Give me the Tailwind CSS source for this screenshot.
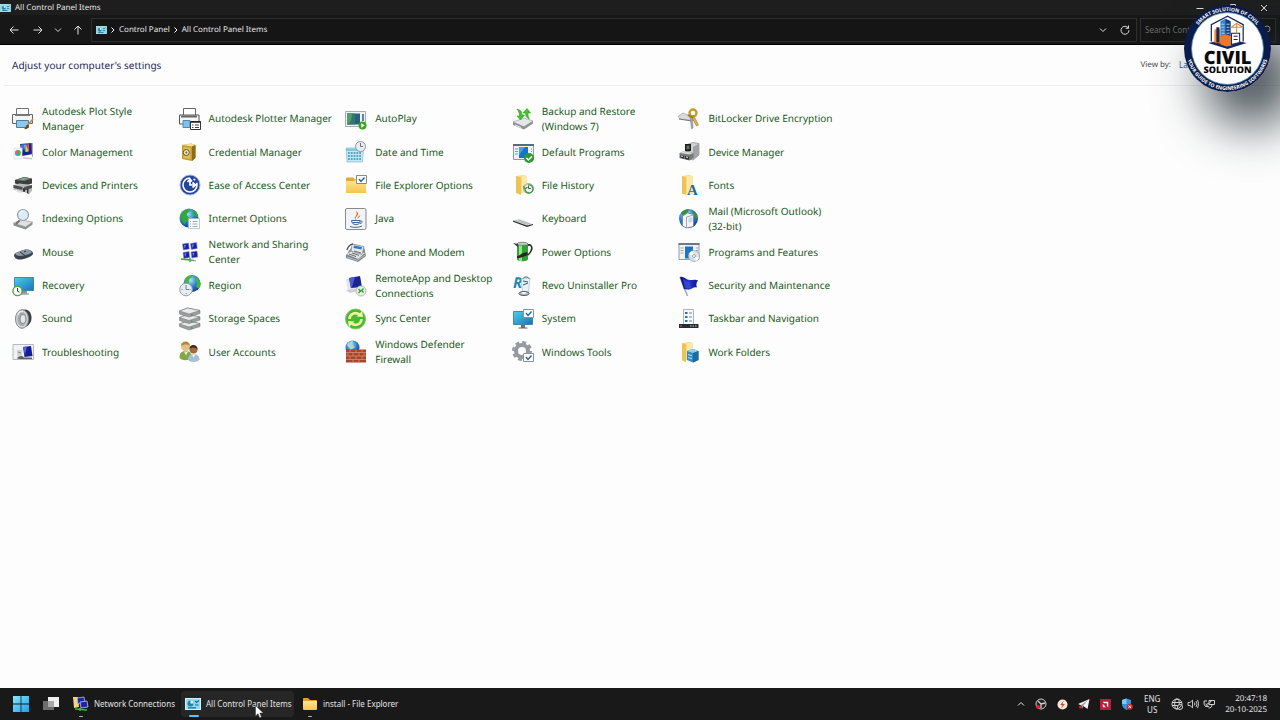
<!DOCTYPE html>
<html lang="en">
<head>
<meta charset="utf-8">
<meta name="viewport" content="width=device-width, initial-scale=1">
<title>All Control Panel Items</title>
<script src="https://cdn.jsdelivr.net/npm/@tailwindcss/browser@4"></script>
</head>
<body class="relative flex min-h-screen flex-col overflow-x-hidden bg-[#fdfdfd] font-['Noto_Sans','Open_Sans',sans-serif] text-[10px] [text-rendering:geometricPrecision]">

<svg class="absolute size-0" aria-hidden="true">
  <defs>
    <linearGradient id="screen" x1="0" y1="0" x2="1" y2="1"><stop offset="0" stop-color="#4fd0e6"/><stop offset="1" stop-color="#1474b8"/></linearGradient>
    <linearGradient id="folder" x1="0" y1="0" x2="0" y2="1"><stop offset="0" stop-color="#ffe594"/><stop offset="1" stop-color="#f3c64c"/></linearGradient>
    <linearGradient id="navy" x1="0" y1="0" x2="1" y2="0"><stop offset="0" stop-color="#0b1170"/><stop offset=".5" stop-color="#2a36c8"/><stop offset="1" stop-color="#0d1488"/></linearGradient>
    <linearGradient id="win" gradientUnits="userSpaceOnUse" x1="0" y1="0" x2="16" y2="16"><stop offset="0" stop-color="#8be6ff"/><stop offset="1" stop-color="#1aa0e8"/></linearGradient>
    <radialGradient id="globe" cx=".4" cy=".3" r=".8"><stop offset="0" stop-color="#a8e4ff"/><stop offset=".5" stop-color="#2c80d0"/><stop offset="1" stop-color="#0b2f7c"/></radialGradient>
    <symbol id="cpl" viewBox="0 0 16 12">
      <rect x=".5" y=".5" width="15" height="11" fill="#8adcf2" stroke="#d6f3fb"/>
      <circle cx="5.5" cy="5.5" r="3" fill="#2a7fa8"/><path d="M5.500 5.500V2.500A3 3 0 0 1 8.500 5.500z" fill="#e8f6e0"/>
      <path d="M10 3l1.500 1.500L14 2.500M10 7h3.500M3 9.800h8" stroke="#1b6f96" stroke-width="1.200" fill="none"/>
    </symbol>
  </defs>
</svg>

<header class="bg-[#181818] text-[#e6e6e6]">
  <div class="flex h-[15px] items-center gap-1 bg-[#1e1e1e] pr-3 text-[8px]">
    <svg class="h-2 w-[11px]"><use href="#cpl"/></svg>
    <h1 class="flex-1 leading-[15px]">All Control Panel Items</h1>
    <div class="flex items-center gap-6">
      <button aria-label="Minimize"><svg class="size-2" viewBox="0 0 8 8"><path d="M.5 4.500h7" stroke="#ddd"/></svg></button>
      <button aria-label="Restore"><svg class="size-2" viewBox="0 0 8 8" fill="none" stroke="#ddd"><path d="M.5 2.500h5v5h-5zM2.500 2.500v-2h5v5h-2"/></svg></button>
      <button aria-label="Close"><svg class="size-2" viewBox="0 0 8 8"><path d="M1 1l6 6M7 1L1 7" stroke="#eee"/></svg></button>
    </div>
  </div>
  <div class="flex h-[30px] items-center border-b border-black bg-[#171717] pr-1 text-[8px]">
    <nav class="flex w-[91px] items-center gap-[11px] pl-[9px]" aria-label="History">
      <button aria-label="Back"><svg class="size-[10px]" viewBox="0 0 10 10" fill="none" stroke="#e4e4e4"><path d="M9.500 5H1M4.500 1.500L1 5l3.500 3.500"/></svg></button>
      <button class="ml-[3px]" aria-label="Forward"><svg class="size-[10px]" viewBox="0 0 10 10" fill="none" stroke="#e4e4e4"><path d="M.5 5H9M5.500 1.500L9 5 5.500 8.500"/></svg></button>
      <button aria-label="Recent locations"><svg class="h-[10px] w-2" viewBox="0 0 8 10" fill="none" stroke="#cfcfcf"><path d="M1 3.500l3 3 3-3"/></svg></button>
      <button aria-label="Up"><svg class="size-[10px]" viewBox="0 0 10 10" fill="none" stroke="#e4e4e4"><path d="M5 9.500V1M1.500 4.500L5 1l3.500 3.500"/></svg></button>
    </nav>
    <div class="flex h-[24px] flex-1 items-center border border-[#2e2e2e] bg-[#151515] pl-1">
      <svg class="h-2 w-[11px]"><use href="#cpl"/></svg>
      <svg class="mx-1 h-2 w-1" viewBox="0 0 4 8" fill="none" stroke="#fff"><path d="M.5 1.500L3 4 .5 6.500"/></svg>
      <a href="#">Control Panel</a>
      <svg class="mx-1 h-2 w-1" viewBox="0 0 4 8" fill="none" stroke="#fff"><path d="M.5 1.500L3 4 .5 6.500"/></svg>
      <a href="#" class="flex-1">All Control Panel Items</a>
      <button class="mr-[13px]" aria-label="Previous locations"><svg class="size-2" viewBox="0 0 8 8" fill="none" stroke="#dcdcdc"><path d="M1 2.500l3 3 3-3"/></svg></button>
      <button class="mr-[6px]" aria-label="Refresh"><svg class="size-[10px]" viewBox="0 0 10 10" fill="none" stroke="#dcdcdc"><path d="M8.300 3A4 4 0 1 0 9 5.300M8.500.5v2.800H5.700"/></svg></button>
    </div>
    <label class="ml-[3px] flex h-[24px] w-[136px] items-center border border-[#2e2e2e] bg-[#151515] px-1">
      <input type="search" aria-label="Search Control Panel" placeholder="Search Control Panel" class="w-full bg-transparent outline-none placeholder:text-[#6c6c6c]">
      <svg class="size-[10px] shrink-0" viewBox="0 0 10 10" fill="none" stroke="#aaa"><circle cx="6" cy="4" r="3"/><path d="M4 6L1 9"/></svg>
    </label>
  </div>
</header>

<main class="flex-1">
  <div class="ml-1 flex h-[41px] items-center justify-between border-b border-[#ececec] pl-2">
    <h2 class="text-[10px] text-[#1c2755]">Adjust your computer's settings</h2>
    <div class="flex items-center gap-2 pr-[29px] text-[8px] text-[#4a4a4a]">
      <label for="view">View by:</label>
      <select id="view" class="w-[72px] appearance-none bg-transparent text-[#20608c]"><option>Large icons</option><option>Small icons</option></select>
    </div>
  </div>

  <nav aria-label="Control Panel items" class="mt-4 ml-[11px] grid min-h-[267px] max-w-[833px] grid-cols-5 grid-rows-8 leading-[15px] text-[#1a5a22] [&_a]:flex [&_a]:items-center [&_a]:gap-[7px] [&_a]:pr-1 [&_svg]:size-6 [&_svg]:shrink-0">
    <a href="#"><svg viewBox="0 0 24 24"><path d="M5.500 8V1.500h12V8" fill="#fff" stroke="#777"/><path d="M1.500 7.500h20v9h-20z" fill="#f4f4f4" stroke="#666"/><path d="M4 8h15" stroke="#777" stroke-width="2"/><path d="M5.500 13.500h12v7h-12z" fill="#8ec8ef" stroke="#4d7ea0"/><path d="M22 12l-7 8" stroke="#c98a3a" stroke-width="1.600"/><path d="M16.500 17.500l1.500 1.500c-1 3-3 3.500-5 3 2-1 1.500-3.500 3.500-4.500z" fill="#7a4a1c"/></svg><span>Autodesk Plot Style<br>Manager</span></a>
    <a href="#"><svg viewBox="0 0 24 24"><path d="M5.500 8V1.500h12V8" fill="#fff" stroke="#666"/><path d="M1.500 8h19.500v9h-19.500z" fill="#f6f6f6" stroke="#555"/><path d="M3 9.500h16" stroke="#666" stroke-width="2"/><path d="M5 13.500h7v7H5z" fill="#7cc3ee" stroke="#5a88a4"/><path d="M12.500 14.500h10v8h-10z" fill="#fff" stroke="#333"/><path d="M12.500 15h10" stroke="#222" stroke-width="1.500"/><path d="M14 18h1.500M17 18h4M14 20.500h1.500M17 20.500h4" stroke="#444"/></svg><span>Autodesk Plotter Manager</span></a>
    <a href="#"><svg viewBox="0 0 24 24"><path d="M1.500 4.500h20v15h-20z" fill="#f2f4f4" stroke="#a9adb0"/><path d="M3 6.500h13v11H3z" fill="#285f82"/><path d="M3 6.500h8v11H3z" fill="#2e7a70"/><path d="M3 17.500c3-1 5-5 5-11H3z" fill="#4fa06a"/><path d="M19 7v7" stroke="#2c5a86" stroke-width="1.500"/><circle cx="18.500" cy="18.500" r="4" fill="#3fa51c"/><path d="M17.300 16.300v4.400l3.500-2.200z" fill="#fff"/></svg><span>AutoPlay</span></a>
    <a href="#"><svg viewBox="0 0 24 24"><path d="M2 15l11-4 9 3-9 6z" fill="#e5e6e7" stroke="#999" stroke-width=".6"/><path d="M2 15v3l11 4.500v-3zM13 19.500v3l9-6V14z" fill="#8f9295"/><path d="M4 18l6 2.500" stroke="#eee"/><path d="M6 2c4 1 5 3 5 6h2.500L9.500 13 6 9h2.500C8.500 6 7.500 4 6 2zM18.500 12c-3-1-4-3-4-6H12l4-4.500L19.500 6H17c0 2 0 4 1.500 6z" fill="#43c52a" stroke="#208c14" stroke-width=".5"/></svg><span>Backup and Restore<br>(Windows 7)</span></a>
    <a href="#"><svg viewBox="0 0 24 24"><path d="M1 9.500L6 6l11 4.500-1 3L3 12z" fill="#d9dadb" stroke="#999" stroke-width=".6"/><path d="M2 12l13 2" stroke="#777"/><circle cx="16" cy="6" r="3.500" fill="none" stroke="#c89a34" stroke-width="2.400"/><path d="M17 9l4.500 9-2 1-5-9z" fill="#ddb24c" stroke="#936a18" stroke-width=".5"/><path d="M13 9.500L14.500 22l1.500-1-.5-11z" fill="#a9a9a9" stroke="#666" stroke-width=".4"/><path d="M11 8l5 3" stroke="#a87918" stroke-width="2"/></svg><span>BitLocker Drive Encryption</span></a>

    <a href="#"><svg viewBox="0 0 24 24"><path d="M9 4l12-1 1 11-11 2z" fill="#1c2290"/><path d="M9.500 4.500L15 4l-4 9z" fill="#5a66d4"/><path d="M13 5l5-.5-.5 7-3 .5z" fill="#f0d820"/><path d="M15 5l3-.5-.5 7z" fill="#e23a6a"/><path d="M13 5h2v6l-1 1z" fill="#28c6b8"/><path d="M20.500 3l1.500 0 0 14-1 0z" fill="#aaa"/><path d="M3 8h8v11H3z" fill="#f6f6f6" stroke="#ddd" stroke-width=".6"/><circle cx="6.800" cy="13" r="3" fill="#e8d838"/><path d="M6.800 10a3 3 0 0 1 0 6z" fill="#3dbb4a"/><path d="M4 13a3 3 0 0 1 3-3v3z" fill="#d8589a"/><path d="M4 13a3 3 0 0 0 3 3v-3z" fill="#4a9be0"/><path d="M12 17l9 1v1.500l-9-1z" fill="#c9c9c9"/></svg><span>Color Management</span></a>
    <a href="#"><svg viewBox="0 0 24 24"><path d="M4 5l9-1.500 4.500 1.500v13L14 21 4 19z" fill="#c49c30"/><path d="M4 5l9-1.500L17.500 5 14 6.500z" fill="#f3e19a"/><path d="M14 6.500L17.500 5v13L14 21z" fill="#8e6d16"/><path d="M5.500 7l7 .8V19l-7-1.200z" fill="#dcc060"/><circle cx="8.300" cy="12.500" r="3" fill="#efe6c8" stroke="#695114"/><circle cx="8.300" cy="12.500" r="1" fill="#6a6048"/></svg><span>Credential Manager</span></a>
    <a href="#"><svg viewBox="0 0 24 24"><path d="M2 8l15 0 2.500 1L18.500 22H3z" fill="#c2e8f4" stroke="#78b4c8" stroke-width=".6"/><path d="M2 8.500h16v2.500H2z" fill="#80cade"/><path d="M4 13h13M4 16h13M4 19h13" stroke="#5aa6c0" stroke-width="1.800" stroke-dasharray="1.800 1"/><circle cx="16.500" cy="6.500" r="5" fill="#e9edef" stroke="#8e989c"/><path d="M16.500 3v3.500H19" fill="none" stroke="#68757c"/></svg><span>Date and Time</span></a>
    <a href="#"><svg viewBox="0 0 24 24"><path d="M2.500 4.500h20v15h-20z" fill="#eef2f5" stroke="#8e9aa4"/><path d="M2 4h21v2H2z" fill="#566a7c"/><path d="M4 9h3M4 11.500h3M4 14h3M20 9h1M20 11.500h1" stroke="#7a99b8"/><path d="M8 7h9v11H8z" fill="#1872c8"/><path d="M8 7h6l-6 8z" fill="#4c9ce4"/><circle cx="18" cy="18" r="5" fill="#2d9a34"/><path d="M15.500 18l2 2 3.500-3.800" fill="none" stroke="#fff" stroke-width="1.500"/></svg><span>Default Programs</span></a>
    <a href="#"><svg viewBox="0 0 24 24"><path d="M9 5l7-2.500 6 1V15l-6 5-7-3z" fill="#d2d3d4" stroke="#777" stroke-width=".6"/><path d="M16 7l6-3.500V15l-6 5z" fill="#a1a3a5"/><path d="M8 4l6 0v7l-6 1z" fill="#1c1c1e"/><path d="M9.500 5.500l3 0v3.500l-3 .5z" fill="#567a50"/><path d="M2.500 13l5-2 9 2v5l-4 2.500L2.500 18z" fill="#77797c"/><path d="M2.500 13l5-2 9 2-4 1.500z" fill="#d6d7d8"/><path d="M3.500 15l3.500.7v3l-3.500-1zM8 16l4 .8v3L8 19z" fill="#333"/><path d="M4 16l2 .4M9 17l2 .4" stroke="#eee"/></svg><span>Device Manager</span></a>

    <a href="#"><svg viewBox="0 0 24 24"><path d="M4 7l9-3 8 1.500v5L13 13 4 10.500z" fill="#3b3d3f"/><path d="M4 7l9-3 8 1.500L13 8z" fill="#75787b"/><path d="M8 6.500l5-1.500 4 .8L12.500 7z" fill="#82b48c"/><path d="M2.500 12l6-1.500L21 12v6l-3 3-5-2-5 .5-5.500-3z" fill="#b9bbbd"/><path d="M2.500 12l9 2v3l-9-2zM13 14l8-2v3l-7 2.500z" fill="#4c4e50"/><path d="M12 15l2 .5V19l-2-.5zM16 16l1.500 0V21l-1.500-1z" fill="#333"/><path d="M4 17l6 2" stroke="#efefef"/></svg><span>Devices and Printers</span></a>
    <a href="#"><svg viewBox="0 0 24 24"><circle cx="12" cy="12" r="10" fill="#23459c" stroke="#a5b4d8"/><circle cx="12" cy="12" r="7" fill="none" stroke="#fff" stroke-width="1.600" stroke-dasharray="33 3.500 2 3"/><path d="M12 6v6h5.500M14.500 9.500L17.500 12l-3 2.500M9.500 9L12 6l2 2.500" fill="none" stroke="#fff" stroke-width="1.700"/></svg><span>Ease of Access Center</span></a>
    <a href="#"><svg viewBox="0 0 24 24"><path d="M2 5.500q0-1 1-1h6l2 2h10q1 0 1 1V19q0 1-1 1H3q-1 0-1-1z" fill="#e2aa30"/><path d="M2 9q0-1 1-1h7l2-1h9q1 0 1 1v11q0 1-1 1H3q-1 0-1-1z" fill="url(#folder)"/><path d="M12.500 2.500h10v8h-10z" fill="#fff" stroke="#8b8b8b"/><path d="M15 6l2 2.500 3.500-4" fill="none" stroke="#1f62a8" stroke-width="1.400"/></svg><span>File Explorer Options</span></a>
    <a href="#"><svg viewBox="0 0 24 24"><path d="M5 3l7-1 4 1v17H5z" fill="#f7dc84"/><path d="M5 3l5 1.500V22L5 20z" fill="#ecc456"/><path d="M11 3h5v17h-5z" fill="#fae8a8"/><circle cx="17.500" cy="15.500" r="4.800" fill="#f0f2f0" stroke="#8b9490"/><path d="M14 16a4 4 0 1 0 3-4M12.500 13l1.500 3 2.500-2" fill="none" stroke="#3c9a44" stroke-width="1.300"/><path d="M17.500 13v2.500h2.500" fill="none" stroke="#555"/></svg><span>File History</span></a>
    <a href="#"><svg viewBox="0 0 24 24"><path d="M5 3l7-1 4 1v18H5z" fill="#f7dc84"/><path d="M5 3l4 1.500V22l-4-1.500z" fill="#ecc456"/><path d="M10 3h6v17h-6z" fill="#fae8a8"/><text x="10" y="21.500" font-family="Liberation Serif, serif" font-size="15" font-weight="bold" fill="#276a92">A</text></svg><span>Fonts</span></a>

    <a href="#"><svg viewBox="0 0 24 24"><path d="M2.500 16l8-3 11 2-7 5z" fill="#dedfe0" stroke="#999" stroke-width=".6"/><path d="M2.500 16v2.500l12 4V20zM14.500 20v2.500l7-5V15z" fill="#8d8f91"/><path d="M8.500 13.500L5 17" stroke="#7c6f60" stroke-width="2"/><circle cx="12" cy="8" r="5.500" fill="#dcecf7" stroke="#8fa2b0" stroke-width="1.200"/><path d="M8.500 7a4 4 0 0 1 4-3" stroke="#fff" fill="none"/></svg><span>Indexing Options</span></a>
    <a href="#"><svg viewBox="0 0 24 24"><circle cx="11" cy="11" r="9.500" fill="url(#globe)"/><path d="M3 7c2-4 6-5.500 9-5 1 2-2 3-3 5s3 2 2 5-4 2-4 5c-3-2-5-6-4-10zM15 3c3 1 5 4 5 7-2 0-4-1-5-3z" fill="#35a83a"/><path d="M10.500 11.500h11v10h-11z" fill="#fafcfd" stroke="#a7b4ba" stroke-width=".7"/><path d="M12 14.500h1M14.500 14.500h5M12 17h1M14.500 17h5M12 19.500h1M14.500 19.500h5" stroke="#7c99a8" stroke-width=".8"/></svg><span>Internet Options</span></a>
    <a href="#"><svg viewBox="0 0 24 24"><rect x="1.500" y="1.500" width="20.500" height="21" rx="1.500" fill="#f2f3f4" stroke="#878b8f"/><path d="M12 13c-4-3 3-4 0-9 3 2 2.500 3.500 1 5s-2 2-1 4zM14 12c-1-2 1-3 2.500-4-.5 2-2.500 2-2.500 4z" fill="#e0641c"/><path d="M7.500 13.500h8.500c0 3-1 4-4 4s-4-1-4.500-4z" fill="none" stroke="#46698c"/><path d="M16 14c3-.5 3 2 0 2.500M6 19.500c3 1.200 9 1.200 12-.5M8.500 15.500h7" fill="none" stroke="#46698c"/></svg><span>Java</span></a>
    <a href="#"><svg viewBox="0 0 24 24"><path d="M2 13.500l6-1.500 14 5-6 1.500z" fill="#d9dbdd"/><path d="M2 13.500l14 5 6-1.500v1L16 20 2 14.800z" fill="#2f3133"/><path d="M5 13.500l12 4M8 13l11 4" stroke="#a1a4a7" stroke-width=".7"/></svg><span>Keyboard</span></a>
    <a href="#"><svg viewBox="0 0 24 24"><circle cx="11.500" cy="11.500" r="9.500" fill="url(#globe)"/><path d="M4 6c2-3 6-4 8-4l-2 5-4 2zM15 3c4 2 6 6 5.500 10L17 10zM3 14l4 6-3-2z" fill="#3a8f3d"/><path d="M5.500 9l5-3 6 1.500v12L9.500 21l-4-2z" fill="#f4f6f8" stroke="#66798c" stroke-width=".7"/><path d="M9.500 10v11M9.500 10l7-2" stroke="#9aa8b4" fill="none"/><path d="M11.500 11l4-1v5l-4 1z" fill="#c9d8e4"/></svg><span>Mail (Microsoft Outlook)<br>(32-bit)</span></a>

    <a href="#"><svg viewBox="0 0 24 24"><path d="M3 15c0-2 8-5 12-5.500 4 0 7 2 7 4 0 3-9 6-13 6s-6-2-6-4.500z" fill="#39424d"/><path d="M4 14c2-2 8-4.500 11-4.300 3 .1 5.500 1.300 6 2.800-3 2-9 3.500-12 3.500-2 0-4-1-5-2z" fill="#8d99a6"/><path d="M9 12l5 3.500M13 12l2-1" stroke="#2c343d" stroke-width="1"/></svg><span>Mouse</span></a>
    <a href="#"><svg viewBox="0 0 24 24"><g fill="#1a20a4" stroke="#8b90c8" stroke-width=".6"><path d="M4.500 4l6-1 .8 6-6 1zM12.500 3.500l6-1 .8 6-6 1zM5 12.500l6-1 .8 6-6 1zM13 12l6-1 .8 6-6 1z"/></g><path d="M6 5l2-.3-1.500 4zM14 4.500l2-.3-1.500 4zM6.500 13.500l2-.3-1.500 4zM14.500 13l2-.3-1.500 4z" fill="#7884ec"/><path d="M3 19l13 1.500M12 18v4" stroke="#3aa63c" stroke-width="1.600"/><path d="M12 19.500l6 1.500" stroke="#999"/></svg><span>Network and Sharing<br>Center</span></a>
    <a href="#"><svg viewBox="0 0 24 24"><path d="M2 15l8-11 10 3 2 9-8 6-12-4z" fill="#7d8288"/><path d="M2 14l8-4 11 3-7 6z" fill="#dfe2e4"/><path d="M8 4l12 2.500-2 8L7 11z" fill="#e6e8ea" stroke="#84898e" stroke-width=".7"/><path d="M10 5.500l8 1.500-.6 2.500-8-1.600z" fill="#2c7cc8"/><path d="M10 11l7 2M5 14l7 2.500M8 13l7 2.300" stroke="#636870"/><path d="M3 10c1-4 4-6 6-6" fill="none" stroke="#555" stroke-width="1.500"/><path d="M3 17l10 3.500 8-5.500" fill="none" stroke="#bcc0c4"/></svg><span>Phone and Modem</span></a>
    <a href="#"><svg viewBox="0 0 24 24"><path d="M15 6c5-3 7 1 5 5-1 2-2 3-3 4" fill="none" stroke="#2a2a2a" stroke-width="1.600"/><path d="M6 4c0-2 11-2 11 0v15c0 3-11 3-11 0z" fill="#2fa336"/><path d="M8 4.500v16c1 .5 2 .5 3 .5V5z" fill="#8ee887"/><ellipse cx="11.500" cy="3.800" rx="5.500" ry="1.600" fill="#c4cdc2" stroke="#55604f" stroke-width=".6"/><path d="M2 3l5 1v3z" fill="#333"/><path d="M6 16c3 0 3-2 6-3l4-1 1 3-5 2c-3 1-4 1-6 1z" fill="#26282a"/></svg><span>Power Options</span></a>
    <a href="#"><svg viewBox="0 0 24 24"><path d="M2 3.500h20v16H2z" fill="#f1f4f6" stroke="#949da5"/><path d="M1.500 3h21v2h-21z" fill="#6d7a86"/><path d="M3.500 8h3M3.500 10.500h3M3.500 13h3M19 8h2M19 10.500h2" stroke="#8aa4bc"/><path d="M8 6.500h8v12H8z" fill="#1b74c6"/><circle cx="17" cy="16" r="5.500" fill="#dce2e6" stroke="#97a0a8" stroke-width=".7"/><path d="M17 16l-5-2a5.500 5.500 0 0 1 3-3zM17 16l5 2a5.500 5.500 0 0 1-3 3z" fill="#fff"/><circle cx="17" cy="16" r="1.500" fill="#fff" stroke="#9aa"/></svg><span>Programs and Features</span></a>

    <a href="#"><svg viewBox="0 0 24 24"><path d="M3.500 3.500h19v13h-19z" fill="url(#screen)" stroke="#27789e" stroke-width=".8"/><path d="M11 17h5v2.500h-5z" fill="#8b9298"/><path d="M9 20h9" stroke="#737a80"/><circle cx="6.500" cy="17" r="4.600" fill="#fbfdfa" stroke="#58a33c" stroke-width="1.400"/><path d="M6.500 14v3.200l2 1" fill="none" stroke="#333"/></svg><span>Recovery</span></a>
    <a href="#"><svg viewBox="0 0 24 24"><circle cx="14" cy="9.500" r="8.500" fill="url(#globe)"/><path d="M7 5c2-3 5-4 8-4-1 3-3 3-4 5s1 3 0 5-3 0-4 0zM18 3c3 2 5 5 4.500 9-1 2-3 3-4 1s2-3 0-5-2-3-.5-5z" fill="#4bb33c"/><circle cx="8" cy="15.500" r="6.300" fill="#e7edf1" stroke="#97a2aa"/><path d="M8 11v4.500h3M8 20v-1M3.500 15.500h1M12.500 15.500h-1" fill="none" stroke="#66737c" stroke-width=".9"/></svg><span>Region</span></a>
    <a href="#"><svg viewBox="0 0 24 24"><path d="M2 5l12-2v12L4 18z" fill="#e3e4ea"/><path d="M5 4l11-2 2 11-11 1z" fill="#1c2492"/><path d="M5 4l6-1-3 10-1 1z" fill="#4e5ccc"/><path d="M2 16l10-1 3 2-9 2z" fill="#cdd0d4"/><circle cx="17" cy="17" r="5" fill="#e6efe4" stroke="#b4bdb2"/><path d="M14.500 15l2 2-2 2M19.500 14.500l-2 2 2 2" fill="none" stroke="#389c34" stroke-width="1.400"/></svg><span>RemoteApp and Desktop<br>Connections</span></a>
    <a href="#"><svg viewBox="0 0 24 24"><text x="2" y="14" font-family="Open Sans, sans-serif" font-size="15" font-style="italic" font-weight="bold" fill="#2487b4">R</text><path d="M10 5l9-1-1.500 14h-6z" fill="#d6ebf2" fill-opacity=".6" stroke="#9cb6c0" stroke-width=".6"/><path d="M12 4.500c1-2 5-2 6 0M12 7l5 1M12 11l5-2" fill="none" stroke="#3e5866"/><ellipse cx="13" cy="19.500" rx="5" ry="2" fill="#bcc2c6" stroke="#555"/><ellipse cx="13" cy="18.800" rx="2.500" ry=".9" fill="#fff"/></svg><span>Revo Uninstaller Pro</span></a>
    <a href="#"><svg viewBox="0 0 24 24"><path d="M3 3l7.500 19" stroke="#a9adb2" stroke-width="1.600"/><path d="M3 3c4-1 6 3 10 3s5-1 8 .5c-2 2-2 5-1 7-4-1-6 3-10 2-2-.4-3 0-3 0z" fill="url(#navy)"/><path d="M6 5c3 1 4 3 7 3l1 6c-2 1-4 0-6 0z" fill="#3a50d8" fill-opacity=".7"/></svg><span>Security and Maintenance</span></a>

    <a href="#"><svg viewBox="0 0 24 24"><path d="M11 3c5-2 9 1 9.500 7S16 21 12 20z" fill="#3e4042"/><ellipse cx="11" cy="12" rx="6.500" ry="9.300" fill="#d1d3d5" stroke="#858789"/><ellipse cx="11" cy="12" rx="4.500" ry="7" fill="#a6a8aa"/><ellipse cx="12" cy="12" rx="2.800" ry="4.300" fill="#e6e7e8" stroke="#77797b" stroke-width=".7"/><path d="M7 8c1-3 3-4 5-3" fill="none" stroke="#fff"/></svg><span>Sound</span></a>
    <a href="#"><svg viewBox="0 0 24 24"><g stroke="#76797b" stroke-width=".6"><path d="M1.500 17l8-3 12.500 2.500v3L11 23 1.500 19.500z" fill="#9c9ea0"/><path d="M1.500 17l8-3 12.500 2.500-11 3.500z" fill="#e8e9ea"/><path d="M1.500 10.500l8-3L22 10v3l-11 3.500L1.500 13.500z" fill="#9c9ea0"/><path d="M1.500 10.500l8-3L22 10l-11 3.500z" fill="#e8e9ea"/><path d="M1.500 4l8-3L22 3.500v3L11 10 1.500 7z" fill="#9c9ea0"/><path d="M1.500 4l8-3L22 3.500 11 7z" fill="#e8e9ea"/></g><path d="M13 8h1.500M13 14.500h1.500M13 21h1.500" stroke="#3c9a34" stroke-width="1.500"/></svg><span>Storage Spaces</span></a>
    <a href="#"><svg viewBox="0 0 24 24"><circle cx="11.500" cy="12" r="10" fill="#48b830" stroke="#78cc60"/><path d="M5.500 12a6 6 0 0 1 10-4.300M17.500 12a6 6 0 0 1-10 4.300" fill="none" stroke="#f2f3a0" stroke-width="2.600"/><path d="M12.500 9.500l6.500.5-1-6zM10.500 14.500L4 14l1 6z" fill="#f2f3a0"/></svg><span>Sync Center</span></a>
    <a href="#"><svg viewBox="0 0 24 24"><path d="M2.500 4.500h19v13h-19z" fill="url(#screen)" stroke="#27789e" stroke-width=".8"/><path d="M10 18h4v3h-4z" fill="#69727a"/><path d="M7.500 21h9" stroke="#5d666e"/><path d="M12.500 2.500h10v8h-10z" fill="#fff" stroke="#8b9298"/><path d="M15 6l2 2.500 3.500-4" fill="none" stroke="#1f62a8" stroke-width="1.400"/></svg><span>System</span></a>
    <a href="#"><svg viewBox="0 0 24 24"><path d="M6.500 2.500h10v15h-10z" fill="#f7f8f9" stroke="#b1b5b9"/><path d="M8 5h2.500v2H8zM8 9h2.500v2H8zM8 13h2.500v2H8z" fill="#2870b0"/><path d="M12 6h3M12 10h3M12 14h3" stroke="#7a8288"/><path d="M2 17h19.500v4H2z" fill="#2a2b2d"/><path d="M13 19h1.500M15.500 19H17M18 19h1.500" stroke="#ccc"/><path d="M3 19h2" stroke="#888"/></svg><span>Taskbar and Navigation</span></a>

    <a href="#"><svg viewBox="0 0 24 24"><path d="M2 4.500h20.500v15H2z" fill="#f1f2f4" stroke="#b6b9bd"/><path d="M12 7l8-1 1.500 10-8 1z" fill="#141c96"/><path d="M12 7l4-.5L14 15z" fill="#5564d8"/><path d="M6 10h5v8H6z" fill="#d2d4d6"/><path d="M6 18.500c3-3 5-3 7-1h8v1.500H8z" fill="#5e6266"/><path d="M7 12l3 1" stroke="#888"/></svg><span>Troubleshooting</span></a>
    <a href="#"><svg viewBox="0 0 24 24"><circle cx="7.500" cy="6.500" r="4.500" fill="#e3c088"/><path d="M3 6c0-6 9-6 9 0-2-2-6-2-9 0z" fill="#b08a30"/><path d="M1.500 18c0-5 2-7 6-7s6 2 6 6l-4 3c-4 .5-7-.5-8-2z" fill="#84a646"/><path d="M6 11.500l2 4 2-4z" fill="#e9efe0"/><circle cx="15.500" cy="9.500" r="4" fill="#a26a40"/><path d="M11.500 9c0-6 8.500-5 8 1-1-2-4-4-8-1z" fill="#3a2a20"/><path d="M10 20c0-4 2-6 5.500-6s6 2 6 6c-3 2.500-9 2.500-11.500 0z" fill="#a4bfd8"/><path d="M14 14.500l1.500 3 2-3z" fill="#fff"/></svg><span>User Accounts</span></a>
    <a href="#"><svg viewBox="0 0 24 24"><circle cx="8.500" cy="7.500" r="7" fill="url(#globe)"/><path d="M3 5c2-3 4-4 6-4l-1 4 3 2-4 3z" fill="#a9dcc4"/><path d="M2 9.500h20v13H2z" fill="#a8432c"/><path d="M2 12.500h20M2 16h20M2 19.500h20M6 9.500v3M12 9.500v3M18 9.500v3M4 12.500V16M9 12.500V16M15 12.500V16M20 12.500V16M6 16v3.500M12 16v3.500M18 16v3.500M9 19.500v3M15 19.500v3" stroke="#d89a80" stroke-width=".7"/></svg><span>Windows Defender<br>Firewall</span></a>
    <a href="#"><svg viewBox="0 0 24 24"><circle cx="11" cy="11" r="6" fill="none" stroke="#959a9f" stroke-width="4"/><circle cx="11" cy="11" r="8.800" fill="none" stroke="#959a9f" stroke-width="2.400" stroke-dasharray="3.900 3"/><path d="M12.500 13.500h10v8h-10z" fill="#fff" stroke="#8b9298"/><path d="M15 17l2 2.500 3.500-4" fill="none" stroke="#1f62a8" stroke-width="1.400"/></svg><span>Windows Tools</span></a>
    <a href="#"><svg viewBox="0 0 24 24"><path d="M5 3l7-1 4 1v17H5z" fill="#f7dc84"/><path d="M5 3l4 1.500V22l-4-1.500z" fill="#ecc456"/><path d="M10 3h6v17h-6z" fill="#fae8a8"/><path d="M10 11l6-2 5.500 2v9L16 22.500 10 20z" fill="#2f8cc4"/><path d="M10 11l6-2 5.500 2L16 13z" fill="#8fd2f0"/><path d="M16 13l5.500-2v9L16 22.500z" fill="#1c6ca4"/><path d="M11 14.500l4 1.300M11 17.500l4 1.300" stroke="#bfe4f6"/></svg><span>Work Folders</span></a>
  </nav>
</main>

<footer class="flex h-8 items-center bg-[#191919] text-[8px] text-[#e4e4e4]">
  <button class="ml-[13px]" aria-label="Start"><svg class="size-4" viewBox="0 0 16 16" fill="url(#win)"><path d="M0 0h7.600v7.600H0zM8.400 0H16v7.600H8.400zM0 8.400h7.600V16H0zM8.400 8.400H16V16H8.400z"/></svg></button>
  <button class="ml-[14px]" aria-label="Task view"><svg class="size-4" viewBox="0 0 16 16"><path d="M0 5h11v9H0z" fill="#6e6e6e"/><path d="M5 1h11v10H5z" fill="#f0f0f0"/><path d="M5 5h6v6H5z" fill="#a9a9a9"/></svg></button>
  <button class="relative ml-2 flex h-[26px] w-[113px] items-center gap-[5px] pl-[6px] whitespace-nowrap">
    <svg class="size-4 shrink-0" viewBox="0 0 16 16"><path d="M0 1h5l1 10-5 1z" fill="#f0d878"/><path d="M4 2l7-1 1 6-7 1z" fill="#1a24b0" stroke="#c9cce8" stroke-width=".7"/><path d="M7 6l7-1 1 6-7 1z" fill="#1a24b0" stroke="#d9dcf0" stroke-width=".7"/><path d="M2 13l12 1M7 12v3" stroke="#3cb840" stroke-width="1.500"/></svg>
    <span>Network Connections</span>
    <span class="absolute bottom-0 left-[12px] h-px w-[4px] rounded-full bg-[#b5b5b5]"></span>
  </button>
  <button class="relative ml-px flex h-[26px] w-[113px] items-center gap-[5px] rounded-sm bg-[#262626] pl-1 whitespace-nowrap">
    <svg class="h-3 w-4 shrink-0"><use href="#cpl"/></svg>
    <span>All Control Panel Items</span>
    <span class="absolute bottom-0 left-[8px] h-[2px] w-[10px] rounded-full bg-[#5cc6ee]"></span>
    <svg class="absolute top-[14px] left-[74px] h-[14px] w-[9px]" viewBox="0 0 9 14"><path d="M.5.500v10.500l2.500-2.300 1.700 4 1.800-.8-1.700-3.800 3.500-.2z" fill="#fff" stroke="#333" stroke-width=".5"/></svg>
  </button>
  <button class="relative ml-1 flex h-[26px] items-center gap-[5px] pl-1 whitespace-nowrap">
    <svg class="h-4 w-4 shrink-0" viewBox="0 0 16 16"><path d="M1 3q0-1 1-1h4l2 2h6q1 0 1 1v8H1z" fill="#dba128"/><path d="M1 5h14v8q0 1-1 1H2q-1 0-1-1z" fill="url(#folder)"/></svg>
    <span>install - File Explorer</span>
    <span class="absolute bottom-0 left-[10px] h-px w-[4px] rounded-full bg-[#b5b5b5]"></span>
  </button>

  <div class="ml-auto flex items-center gap-[10px] pr-[13px]">
    <button aria-label="Show hidden icons"><svg class="size-2" viewBox="0 0 8 8" fill="none" stroke="#e4e4e4"><path d="M1 5.500l3-3 3 3"/></svg></button>
    <svg class="size-3" viewBox="0 0 12 12"><circle cx="6" cy="6" r="5" fill="#222" stroke="#cfcfcf"/><path d="M6 6L3 3M6 6l4-1M6 6v4" stroke="#cfcfcf" stroke-width="1.300"/><circle cx="3" cy="9" r="2" fill="#e0252c"/></svg>
    <svg class="size-[11px]" viewBox="0 0 12 12"><circle cx="6" cy="6" r="5.500" fill="#fbe6da"/><path d="M7.500 1.500L3.500 6.500H6L4.500 10.500 8.500 5.500H6z" fill="#c04a2c"/></svg>
    <svg class="size-3" viewBox="0 0 12 12"><path d="M0 6l11.500-5-2 10-3.500-2.500z" fill="#f4f4f4"/><path d="M3 7l7-5-5 6-.5 3z" fill="#9c9c9c"/><circle cx="2.500" cy="9" r="1.500" fill="#d8252c"/></svg>
    <svg class="size-[11px]" viewBox="0 0 12 12"><path d="M0 0h12v12H0z" fill="#c3173c"/><path d="M3 3h6v6L7.500 7.500v-3h-3zM3 5.500V9h3.500L5 7.500V7z" fill="#fff"/></svg>
    <svg class="size-3" viewBox="0 0 12 12"><path d="M1 2l4.500-1.500L10 2v4c0 3-2 5-4.500 6C3 11 1 9 1 6z" fill="#2f94dc"/><path d="M1 2l4.500-1.500V6H1z" fill="#7ccaf4"/><circle cx="8.700" cy="8.700" r="3" fill="#d22b38"/><path d="M7.500 7.500l2.400 2.400M9.900 7.500L7.500 9.900" stroke="#fff"/></svg>
    <button class="w-[18px] text-center leading-[11px]">ENG<br>US</button>
    <button class="flex items-center gap-1" aria-label="Network, volume and battery">
      <svg class="size-3" viewBox="0 0 12 12" fill="none" stroke="#d5d5d5"><circle cx="6" cy="6" r="5"/><ellipse cx="6" cy="6" rx="2.300" ry="5"/><path d="M1 4.500h10M1 7.500h6"/><circle cx="9" cy="9" r="2.500" fill="#191919"/><path d="M7.500 10.500l3-3"/></svg>
      <svg class="h-3 w-3" viewBox="0 0 12 12" fill="none" stroke="#d5d5d5"><path d="M1 4.500h2l2.500-2.300v7.600L3 7.500H1zM7.300 4.500q1 1.500 0 3M9 3q2 3 0 6M10.500 1.800q2.500 4 0 8.400" stroke-width=".9"/></svg>
      <svg class="h-3 w-3" viewBox="0 0 12 12" fill="none" stroke="#d5d5d5"><path d="M5 8.500H2.500q-2-2-1.500-5.500h3M6 2.500h5.500v4H6zM4 6c2 0 3-1 4-3M5.500 10c2 0 3.500-1 3.500-3.500M3 5.500q0 3 3 3"/></svg>
    </button>
    <time class="text-right leading-[11px]">20:47:18<br>20-10-2025</time>
  </div>
</footer>

<!-- Channel badge floating over the window corner -->
<div class="absolute top-[5px] right-[9px] size-[87px] rounded-full shadow-[24px_30px_50px_4px_rgba(28,40,48,0.8)]">
  <svg class="size-full" viewBox="0 0 86 86" role="img" aria-label="Civil Solution">
    <defs>
      <path id="arcTop" d="M6 43a37 37 0 0 1 74 0"/>
      <path id="arcBottom" d="M2 43a41 41 0 0 0 82 0"/>
    </defs>
    <circle cx="43" cy="43" r="43" fill="#0b1c4a"/>
    <circle cx="43" cy="43" r="35.500" fill="#fff" stroke="#4d8fc4" stroke-width=".8"/>
    <g fill="#fff" font-family="Open Sans, sans-serif" font-weight="bold" font-size="5" text-anchor="middle">
      <text><textPath href="#arcTop" startOffset="50%">SMART SOLUTION OF CIVIL</textPath></text>
      <text><textPath href="#arcBottom" startOffset="50%">YOUR GUIDE TO ENGINEERING SOFTWARES</textPath></text>
    </g>
    <g transform="translate(0 2)">
      <path d="M27 34V17.500L43 9l15.500 8.500V34" fill="none" stroke="#14245c" stroke-width="1.200"/>
      <path d="M24 35.500l9-2 10 3.500 10-3.500 9 2-19 6z" fill="#16265e"/>
      <path d="M30 22h6v14l-6-1z" fill="#f08a2c"/><path d="M32 20h3v15h-3z" fill="#16265e"/>
      <path d="M36 14l5-2.500 5 2.500v24l-10-2z" fill="#3a86c4"/><path d="M41 11.500l5 2.500v22h-5z" fill="#173a80"/>
      <path d="M37 17h3M37 20h3M37 23h3M37 26h3M42 17h3M42 20h3M42 23h3M42 26h3" stroke="#9fd0f0"/>
      <path d="M36 29l5-2 6 2v9l-5 1-6-2z" fill="#f0762a"/>
      <path d="M47 26h8v9l-8 2z" fill="#fff" stroke="#16265e"/><path d="M49 29h4M49 32h4" stroke="#16265e"/>
      <path d="M46 20h12M52 16v10M52 16l6 4M52 16l-5 4" fill="none" stroke="#e88a3a"/>
    </g>
    <g fill="#0a0a0a" font-family="Open Sans, sans-serif" font-weight="800" text-anchor="middle">
      <text x="43" y="58" font-size="18">CIVIL</text>
      <text x="43" y="67" font-size="9">SOLUTION</text>
    </g>
  </svg>
</div>
</body>
</html>
